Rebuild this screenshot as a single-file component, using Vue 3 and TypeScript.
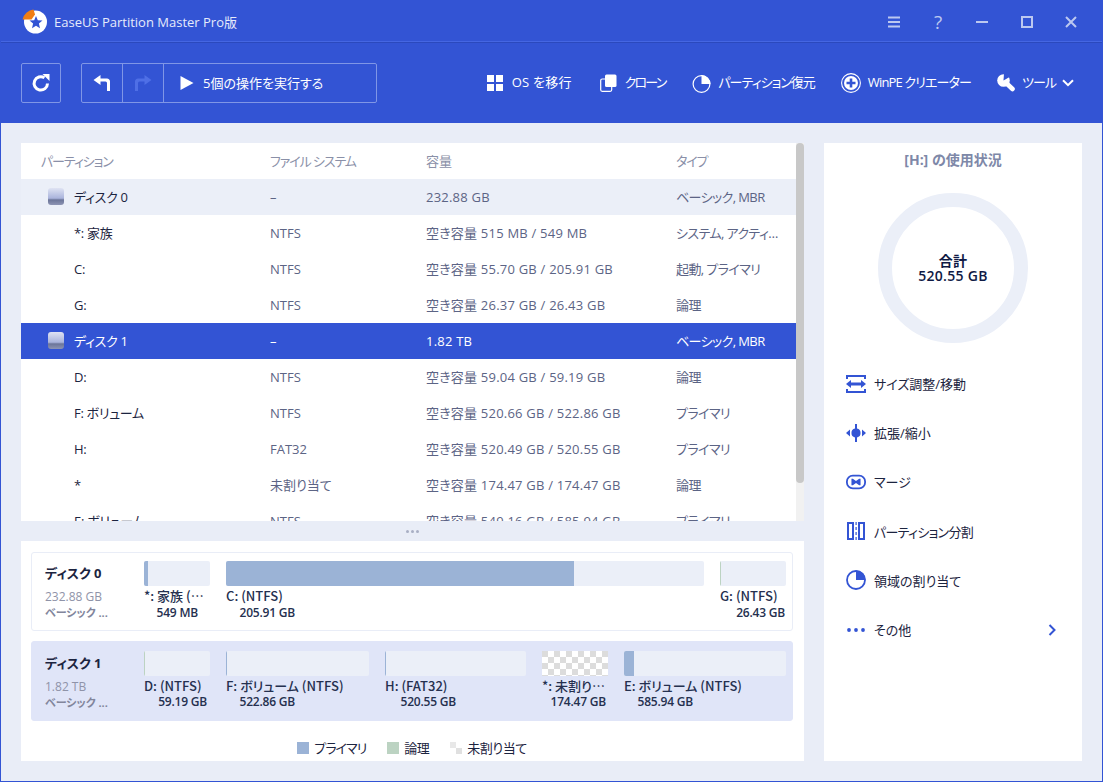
<script setup lang="ts">
interface Row { name: string; fs: string; cap: string; type: string; disk?: boolean; sel?: boolean }
const rows: Row[] = [
  { name: 'ディスク 0', fs: '–', cap: '232.88 GB', type: 'ベーシック, MBR', disk: true },
  { name: '*: 家族', fs: 'NTFS', cap: '空き容量 515 MB / 549 MB', type: 'システム, アクティ…' },
  { name: 'C:', fs: 'NTFS', cap: '空き容量 55.70 GB / 205.91 GB', type: '起動, プライマリ' },
  { name: 'G:', fs: 'NTFS', cap: '空き容量 26.37 GB / 26.43 GB', type: '論理' },
  { name: 'ディスク 1', fs: '–', cap: '1.82 TB', type: 'ベーシック, MBR', disk: true, sel: true },
  { name: 'D:', fs: 'NTFS', cap: '空き容量 59.04 GB / 59.19 GB', type: '論理' },
  { name: 'F: ボリューム', fs: 'NTFS', cap: '空き容量 520.66 GB / 522.86 GB', type: 'プライマリ' },
  { name: 'H:', fs: 'FAT32', cap: '空き容量 520.49 GB / 520.55 GB', type: 'プライマリ' },
  { name: '*', fs: '未割り当て', cap: '空き容量 174.47 GB / 174.47 GB', type: '論理' },
  { name: 'E: ボリューム', fs: 'NTFS', cap: '空き容量 549.16 GB / 585.94 GB', type: 'プライマリ' },
]
interface Part { label: string; size: string; w: number; fill: number; sz: number; kind: 'p' | 'l' | 'u' }
const disks: { name: string; size: string; sel: boolean; parts: Part[] }[] = [
  { name: 'ディスク 0', size: '232.88 GB', sel: false, parts: [
    { label: '*: 家族 (…', size: '549 MB', w: 66, fill: 4, sz: 54, kind: 'p' },
    { label: 'C: (NTFS)', size: '205.91 GB', w: 478, fill: 348, sz: 69, kind: 'p' },
    { label: 'G: (NTFS)', size: '26.43 GB', w: 66, fill: 1, sz: 65, kind: 'l' },
  ] },
  { name: 'ディスク 1', size: '1.82 TB', sel: true, parts: [
    { label: 'D: (NTFS)', size: '59.19 GB', w: 66, fill: 1, sz: 63, kind: 'l' },
    { label: 'F: ボリューム (NTFS)', size: '522.86 GB', w: 143, fill: 1, sz: 69, kind: 'p' },
    { label: 'H: (FAT32)', size: '520.55 GB', w: 141, fill: 1, sz: 71, kind: 'p' },
    { label: '*: 未割り…', size: '174.47 GB', w: 66, fill: 0, sz: 64, kind: 'u' },
    { label: 'E: ボリューム (NTFS)', size: '585.94 GB', w: 162, fill: 10, sz: 69, kind: 'p' },
  ] },
]
const tools = ['OS を移行', 'クローン', 'パーティション復元', 'WinPE クリエーター', 'ツール']
const actions = ['サイズ調整/移動', '拡張/縮小', 'マージ', 'パーティション分割', '領域の割り当て', 'その他']
</script>

<template>
  <div class="win">
    <header class="title">
      <svg class="logo" width="25" height="25" viewBox="0 0 25 25">
        <circle cx="13.500" cy="13" r="11.500" fill="#fff" />
        <path d="M0.500 10.500A13 13 0 0 1 11.500 0.500L13 5.500 9.500 10.500Z" fill="#f07d14" />
        <path d="M14 7l1.800 4.200 4.700.4-3.600 3 1.100 4.600-4-2.400-4 2.400 1.100-4.600-3.600-3 4.700-.4Z" fill="#3354d4" />
      </svg>
      <span class="app">EaseUS Partition Master Pro版</span>
      <div class="winbtns">
        <svg width="14" height="14" viewBox="0 0 14 14"><path d="M1 2.500h12M1 7h12M1 11.500h12" stroke="#bcc8f0" stroke-width="2" /></svg>
        <span class="q">?</span>
        <svg width="14" height="14" viewBox="0 0 14 14"><path d="M1 7h12" stroke="#bcc8f0" stroke-width="2" /></svg>
        <svg width="14" height="14" viewBox="0 0 14 14"><rect x="2" y="2" width="10" height="10" fill="none" stroke="#bcc8f0" stroke-width="2" /></svg>
        <svg width="14" height="14" viewBox="0 0 14 14"><path d="M2 2l10 10M12 2L2 12" stroke="#bcc8f0" stroke-width="2" /></svg>
      </div>
    </header>
    <nav class="toolbar">
      <button class="box refresh">
        <svg width="20" height="20" viewBox="0 0 20 20"><path d="M16.500 10.500A6.700 6.700 0 1 1 13.500 4.800" fill="none" stroke="#fff" stroke-width="3" /><path d="M11.500 1h7v7Z" fill="#fff" /></svg>
      </button>
      <div class="box group">
        <div class="cell">
          <svg width="20" height="20" viewBox="0 0 20 20"><path d="M8.500 2v3.500h6A3 3 0 0 1 18 8.500V18h-3V10a1.500 1.500 0 0 0-1.500-1.500h-5V12L1.500 7Z" fill="#fff" /></svg>
        </div>
        <div class="cell">
          <svg width="20" height="20" viewBox="0 0 20 20"><path d="M11.500 2v3.500h-6A3 3 0 0 0 2 8.500V18h3V10a1.500 1.500 0 0 1 1.500-1.500h5V12L18.500 7Z" fill="#4f6fe6" /></svg>
        </div>
        <div class="exec">
          <svg width="14" height="14" viewBox="0 0 14 14"><path d="M0.500 0L13.500 7 0.500 14Z" fill="#fff" /></svg>
          <span>5個の操作を実行する</span>
        </div>
      </div>
      <div class="tools">
        <div class="tool t-os">
          <svg width="16" height="16" viewBox="0 0 16 16"><path d="M0 0h7v7H0zM9 0h7v7H9zM0 9h7v7H0zM9 9h7v7H9z" fill="#fff" /></svg>
          <span>{{ tools[0] }}</span>
        </div>
        <div class="tool t-clone">
          <svg width="17" height="18" viewBox="0 0 17 18"><rect x="0.700" y="5" width="11" height="12.300" rx="1.500" fill="none" stroke="#fff" stroke-width="1.200" /><rect x="5" y="0.500" width="11.500" height="12.500" rx="1.500" fill="#fff" /></svg>
          <span>{{ tools[1] }}</span>
        </div>
        <div class="tool">
          <svg width="19" height="19" viewBox="0 0 19 19"><circle cx="9.500" cy="10" r="8.400" fill="none" stroke="#fff" stroke-width="1.200" /><path d="M9.500 1v9H18.500A9 9 0 0 0 9.500 1Z" fill="#fff" /></svg>
          <span>{{ tools[2] }}</span>
        </div>
        <div class="tool t-pe">
          <svg width="20" height="20" viewBox="0 0 20 20"><circle cx="10" cy="10" r="9.400" fill="none" stroke="#fff" stroke-width="1.100" /><circle cx="10" cy="10" r="7" fill="#fff" /><path d="M8.700 5.500h2.600v3.200h3.200v2.600h-3.200v3.200H8.700v-3.200H5.500V8.700h3.200Z" fill="#3354d4" /></svg>
          <span>{{ tools[3] }}</span>
        </div>
        <div class="tool last">
          <svg width="19" height="18" viewBox="0 0 19 18">
            <circle cx="6.500" cy="6.500" r="6.300" fill="#fff" />
            <path d="M6.500 6.500L15.500 15" stroke="#fff" stroke-width="4.600" stroke-linecap="round" />
            <path d="M6.500 6.500L7 -1H13V2.800Z" fill="#3354d4" />
          </svg>
          <span>{{ tools[4] }}</span>
          <svg class="chev" width="12" height="8" viewBox="0 0 12 8"><path d="M1 1.200L6 6.200 11 1.200" fill="none" stroke="#fff" stroke-width="2" /></svg>
        </div>
      </div>
    </nav>
    <main class="body">
      <section class="left">
        <div class="listwrap">
          <div class="list">
            <div class="row head">
              <span class="c1">パーティション</span><span class="c2">ファイル システム</span><span class="c3">容量</span><span class="c4">タイプ</span>
            </div>
            <div v-for="r in rows" :key="r.name + r.cap" class="row" :class="{ disk: r.disk, sel: r.sel }">
              <span class="c1 name">
                <i v-if="r.disk" class="hdd"></i>{{ r.name }}
              </span>
              <span class="c2">{{ r.fs }}</span>
              <span class="c3">{{ r.cap }}</span>
              <span class="c4">{{ r.type }}</span>
            </div>
          </div>
          <div class="track"><div class="thumb"></div></div>
        </div>
        <div class="splitter"><i></i><i></i><i></i></div>
        <div class="maps">
          <div v-for="d in disks" :key="d.name" class="map" :class="{ on: d.sel }">
            <div class="dinfo">
              <b>{{ d.name }}</b>
              <span class="dsize">{{ d.size }}</span>
              <span class="dtype">ベーシック ...</span>
            </div>
            <div class="parts">
              <div v-for="p in d.parts" :key="p.label" class="part" :style="{ width: p.w + 'px' }">
                <div class="bar" :class="p.kind">
                  <div v-if="p.kind !== 'u'" class="fill" :style="{ width: p.fill + 'px' }"></div>
                </div>
                <div class="plabel">{{ p.label }}</div>
                <div class="psize" :style="{ width: p.sz + 'px' }">{{ p.size }}</div>
              </div>
            </div>
          </div>
          <div class="legend">
            <span><i class="lg p"></i><em>プライマリ</em></span>
            <span><i class="lg l"></i><em>論理</em></span>
            <span><i class="lg u"></i><em>未割り当て</em></span>
          </div>
        </div>
      </section>
      <aside class="right">
        <h2>[H:] の使用状況</h2>
        <div class="donut">
          <div class="total">合計<br />520.55 GB</div>
        </div>
        <ul class="actions">
          <li>
            <svg width="20" height="18" viewBox="0 0 20 18"><path d="M0 0h20v4h-2V2H2v2H0zM0 14h2v2h16v-2h2v4H0zM0 9l5-4v2.500h10V5l5 4-5 4v-2.500H5V13Z" fill="#3354d4" /></svg>
            <span>{{ actions[0] }}</span>
          </li>
          <li>
            <svg width="20" height="18" viewBox="0 0 20 18"><path d="M9 0h2v4.600a4.500 4.500 0 0 1 0 8.800V18H9v-4.600a4.500 4.500 0 0 1 0-8.800ZM0 9l4-3.500v7ZM20 9l-4-3.500v7Z" fill="#3354d4" /></svg>
            <span>{{ actions[1] }}</span>
          </li>
          <li>
            <svg width="20" height="16" viewBox="0 0 22 16"><rect x="1" y="1" width="20" height="14" rx="6.500" fill="none" stroke="#3354d4" stroke-width="2" /><path d="M6 4.500h1.500L11 7l3.500-2.500H16v7h-1.500L11 9l-3.500 2.500H6Z" fill="#3354d4" /></svg>
            <span>{{ actions[2] }}</span>
          </li>
          <li>
            <svg width="20" height="18" viewBox="0 0 20 18"><path d="M1 0h7v18H1zM3 2v14h3V2zM12 0h7v18h-7zM14 2v14h3V2z" fill="#3354d4" fill-rule="evenodd" /><path d="M9.500 0h1.200v3H9.500zM9.500 5h1.200v3H9.500zM9.500 10h1.200v3H9.500zM9.500 15h1.200v3H9.500z" fill="#3354d4" /></svg>
            <span class="tight">{{ actions[3] }}</span>
          </li>
          <li>
            <svg width="20" height="20" viewBox="0 0 20 20"><circle cx="10" cy="10" r="9" fill="none" stroke="#3354d4" stroke-width="1.800" /><path d="M10 0.500A9.500 9.500 0 0 1 19.500 10H10Z" fill="#3354d4" /></svg>
            <span>{{ actions[4] }}</span>
          </li>
          <li>
            <svg width="20" height="20" viewBox="0 0 20 20"><circle cx="3" cy="10" r="1.900" fill="#3354d4" /><circle cx="10" cy="10" r="1.900" fill="#3354d4" /><circle cx="17" cy="10" r="1.900" fill="#3354d4" /></svg>
            <span>{{ actions[5] }}</span>
            <svg class="more" width="9" height="12" viewBox="0 0 9 12"><path d="M1.500 1l5 5-5 5" fill="none" stroke="#3354d4" stroke-width="2" /></svg>
          </li>
        </ul>
      </aside>
    </main>
  </div>
</template>

<style>
html, body { margin: 0; background: #e9edf7; }
</style>

<style scoped>
.win {
  width: 1103px; height: 782px; box-sizing: border-box;
  display: flex; flex-direction: column; overflow: hidden;
  border: 1px solid #3354d4;
  background: #e9edf7; color: #1c2440;
  font: 13px "Open Sans", "Noto Sans CJK JP", sans-serif;
  font-feature-settings: "palt";
}
.title {
  height: 41px; flex: none; display: flex; align-items: center;
  background: #3354d4; color: #e6ebfb; padding-left: 21px;
  border-bottom: 1px solid #2b49bd; box-shadow: inset 0 -1px 0 #4566e2;
}
.logo { margin-right: 7px; }
.app { font-size: 13px; }
.winbtns { margin-left: auto; display: flex; align-items: center; gap: 30.300px; padding-right: 24px; }
.q { color: #bcc8f0; font-size: 19px; line-height: 20px; width: 14px; text-align: center; }
.toolbar {
  height: 80px; flex: none; background: #3354d4; color: #fff; display: flex; align-items: center; padding: 0 20px; box-sizing: border-box;
}
.box { box-sizing: border-box; height: 40px; border: 1px solid #8096e6; border-radius: 2px; background: transparent; padding: 0; display: flex; align-items: center; }
.refresh { width: 40px; justify-content: center; margin-right: 20px; }
.group { width: 296px; }
.cell { width: 41px; height: 100%; box-sizing: border-box; border-right: 1px solid #8096e6; display: flex; align-items: center; justify-content: center; }
.exec { display: flex; align-items: center; gap: 9px; padding-left: 16px; font-size: 13px; }
.exec span { line-height: 18px; margin-bottom: 1px; }
.tools { margin-left: auto; display: flex; align-items: center; gap: 26px; padding-right: 8px; }
.tool { display: flex; align-items: center; gap: 7px; font-size: 13px; letter-spacing: -1px; }
.tool span { line-height: 18px; margin-bottom: 2px; }
.tool.t-os { gap: 9px; letter-spacing: 0.200px; margin-right: 2px; }
.tool.t-clone { gap: 8px; margin-right: 1px; letter-spacing: -1.800px; }
.tool.t-pe { letter-spacing: -0.850px; }
.tool.last { gap: 6px; }
.body { flex: 1; display: flex; gap: 20px; padding: 20px 19px 20px 20px; min-height: 0; }
.left { width: 783px; flex: none; display: flex; flex-direction: column; }
.listwrap { height: 378px; flex: none; background: #fff; display: flex; overflow: hidden; }
.list { width: 775px; flex: none; }
.track { width: 8px; background: #f1f1f1; }
.thumb { height: 340px; background: #c8c8c8; border-radius: 4px; }
.row { height: 36px; display: flex; align-items: center; color: #5c6485; }
.row span { white-space: nowrap; line-height: 18px; margin-bottom: 1px; }
.row.head { color: #8a90a8; }
.row.head span { letter-spacing: -1.100px; }
.row.head .c3 { letter-spacing: 0; }
.row.disk { background: #ebeff8; }
.row.sel { background: #3354d4; color: #fff; }
.row.sel .name { color: #fff; }
.c1 { width: 249px; padding-left: 20px; box-sizing: border-box; }
.c2 { width: 156px; }
.c3 { width: 250px; letter-spacing: 0.220px; }
.c4 { width: 120px; letter-spacing: -0.600px; }
.name { color: #1c2440; padding-left: 53px; display: flex; align-items: center; letter-spacing: -0.300px; }
.disk .name { padding-left: 27px; }
.hdd { width: 16px; height: 17px; margin-right: 10px; border-radius: 3px; background: linear-gradient(#dfe3f3 0%, #aab4dc 60%, #6c7599 70%, #8d94b4 100%); }
.splitter { height: 20px; flex: none; display: flex; align-items: center; justify-content: center; gap: 2px; }
.splitter i { width: 3px; height: 3px; border-radius: 50%; background: #a9afc4; }
.maps { flex: 1; background: #fff; padding: 11px 11px 0 10px; display: flex; flex-direction: column; gap: 10px; min-height: 0; }
.map { height: 79px; flex: none; box-sizing: border-box; border: 1px solid #e9edf7; border-radius: 3px; display: flex; padding-left: 13px; }
.map.on { height: 80px; background: #e0e5f8; border-color: #e0e5f8; }
.dinfo { width: 99px; flex: none; display: flex; flex-direction: column; padding-top: 10px; }
.map.on .dinfo { padding-top: 11px; }
.dinfo b { font-size: 13px; font-weight: 700; line-height: 20px; margin-bottom: 6px; color: #1c2440; }
.dsize { font-size: 12px; line-height: 16px; color: #8f93a8; }
.dtype { font-size: 11px; line-height: 15px; color: #82869c; font-weight: 700; }
.parts { display: flex; gap: 16px; padding-top: 8px; }
.map.on .parts { padding-top: 9px; }
.part { flex: none; font-size: 13px; }
.bar { height: 25px; background: #ebeff8; border-radius: 2px; overflow: hidden; }
.fill { height: 100%; background: #9bb3d6; }
.bar.l .fill { background: #bcd3c2; }
.bar.u { border-radius: 0; background: repeating-conic-gradient(#dcdcdc 0 25%, #fff 0 50%) 6px 0 / 12px 12px; }
.plabel { font-family: "Noto Sans CJK JP", sans-serif; font-size: 13px; font-weight: 500; line-height: 18px; margin-top: 1px; white-space: nowrap; color: #25304f; }
.psize { font-size: 12px; font-weight: 600; letter-spacing: -0.200px; line-height: 15px; text-align: right; color: #25304f; white-space: nowrap; }
.map.on .psize { margin-top: -1px; }
.legend { display: flex; justify-content: center; gap: 21px; margin-top: 7px; color: #1c2440; }
.legend span { display: flex; align-items: center; gap: 5px; }
.legend em { font-style: normal; letter-spacing: -0.500px; }
.legend span:first-child em { letter-spacing: -1px; }
.lg { width: 12px; height: 12px; }
.lg.p { background: #9bb3d6; }
.lg.l { background: #bcd3c2; }
.lg.u { background: conic-gradient(#fff 0 25%, #e0e0e0 0 50%, #fff 0 75%, #e8e8e8 0); }
.right { width: 258px; flex: none; background: #fff; padding-top: 7px; box-sizing: border-box; display: flex; flex-direction: column; align-items: center; }
.right h2 { margin: 0; font-size: 14px; line-height: 19px; color: #7e88a8; font-weight: 700; }
.donut { box-sizing: border-box; width: 150px; height: 150px; margin-top: 24px; border-radius: 50%; border: 14px solid #ebeff8; display: flex; align-items: center; justify-content: center; }
.total { font-size: 14px; line-height: 15px; text-align: center; font-weight: 600; letter-spacing: 0.300px; color: #0f1a45; }
.actions { list-style: none; margin: 16px 0 0; padding: 0 0 0 22px; width: 100%; box-sizing: border-box; }
.actions li { height: 49.200px; display: flex; align-items: center; gap: 8px; color: #1c2440; }
.actions svg { flex: none; }
.tight { letter-spacing: -0.700px; }
.more { margin-left: auto; margin-right: 25px; }
</style>
